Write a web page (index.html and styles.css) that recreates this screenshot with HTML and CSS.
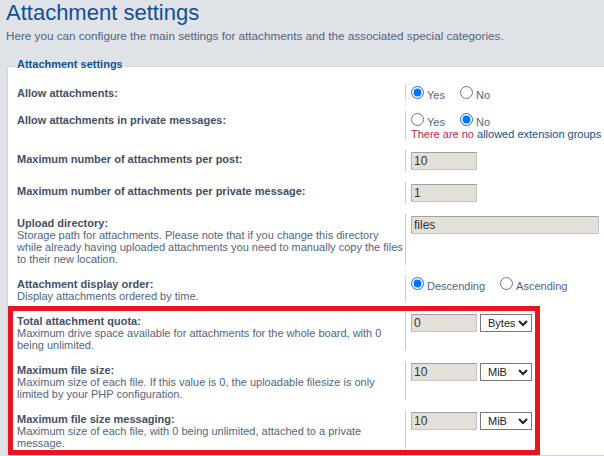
FILE: index.html
```html
<!DOCTYPE html>
<html lang="en">
<head>
<meta charset="utf-8">
<title>Attachment settings</title>
<link rel="stylesheet" href="styles.css">
</head>
<body>
<div class="page">
  <h1 class="title">Attachment settings</h1>
  <p class="intro">Here you can configure the main settings for attachments and the associated special categories.</p>

  <fieldset class="settings">
    <legend class="legend">Attachment settings</legend>

    <div class="row">
      <div class="label"><span class="label-title">Allow attachments:</span></div>
      <div class="field"><label class="choice"><input class="radio" type="radio" name="allow" checked>Yes</label><label class="choice"><input class="radio" type="radio" name="allow">No</label></div>
    </div>

    <div class="row">
      <div class="label"><span class="label-title">Allow attachments in private messages:</span></div>
      <div class="field"><label class="choice"><input class="radio" type="radio" name="allow_pm">Yes</label><label class="choice"><input class="radio" type="radio" name="allow_pm" checked>No</label>
        <div class="notice"><span class="error">There are no</span> <a class="link" href="#">allowed extension groups</a></div>
      </div>
    </div>

    <div class="row">
      <div class="label"><span class="label-title">Maximum number of attachments per post:</span></div>
      <div class="field field-input"><input class="text" type="text" value="10"></div>
    </div>

    <div class="row">
      <div class="label"><span class="label-title">Maximum number of attachments per private message:</span></div>
      <div class="field field-input"><input class="text" type="text" value="1"></div>
    </div>

    <div class="row">
      <div class="label"><span class="label-title">Upload directory:</span><span class="label-desc">Storage path for attachments. Please note that if you change this directory while already having uploaded attachments you need to manually copy the files to their new location.</span></div>
      <div class="field field-input"><input class="text text-wide" type="text" value="files"></div>
    </div>

    <div class="row">
      <div class="label"><span class="label-title">Attachment display order:</span><span class="label-desc">Display attachments ordered by time.</span></div>
      <div class="field"><label class="choice"><input class="radio" type="radio" name="order" checked>Descending</label><label class="choice"><input class="radio" type="radio" name="order">Ascending</label></div>
    </div>

    <div class="highlight">
      <div class="row">
        <div class="label"><span class="label-title">Total attachment quota:</span><span class="label-desc">Maximum drive space available for attachments for the whole board, with 0 being unlimited.</span></div>
        <div class="field field-input"><input class="text" type="text" value="0"><select class="unit"><option>Bytes</option><option>KiB</option><option>MiB</option></select></div>
      </div>

      <div class="row">
        <div class="label"><span class="label-title">Maximum file size:</span><span class="label-desc">Maximum size of each file. If this value is 0, the uploadable filesize is only limited by your PHP configuration.</span></div>
        <div class="field field-input"><input class="text" type="text" value="10"><select class="unit"><option>Bytes</option><option>KiB</option><option selected>MiB</option></select></div>
      </div>

      <div class="row">
        <div class="label"><span class="label-title">Maximum file size messaging:</span><span class="label-desc">Maximum size of each file, with 0 being unlimited, attached to a private message.</span></div>
        <div class="field field-input"><input class="text" type="text" value="10"><select class="unit"><option>Bytes</option><option>KiB</option><option selected>MiB</option></select></div>
      </div>
    </div>
  </fieldset>
</div>
</body>
</html>
```

FILE: styles.css
```css
html {
  overflow: hidden;
}

body {
  margin: 0;
  background: #dfe2e6;
  font-family: "Liberation Sans", Arial, Helvetica, sans-serif;
  font-size: 11px;
  line-height: 12px;
  color: #536482;
}

.page {
  padding: 0 0 0 6px;
}

.title {
  margin: 0;
  padding-top: 1px;
  font-size: 22px;
  line-height: 24px;
  font-weight: normal;
  color: #115098;
}

.intro {
  margin: 4px 0 0;
  font-size: 11.7px;
  line-height: 13px;
  color: #536482;
}

.settings {
  box-sizing: border-box;
  width: 900px;
  min-width: 0;
  margin: 16px 0 0 1px;
  padding: 10px 0 0 9px;
  border: 1px solid #cfd3d8;
  border-radius: 3px;
  background: #fff;
}

.legend {
  padding: 0 2px 4px 0;
  font-weight: bold;
  line-height: 12px;
  color: #115098;
}

.row {
  display: flex;
  margin-bottom: 10px;
}

.label {
  flex: none;
  width: 388px;
  padding-top: 3px;
}

.label-title {
  display: block;
  font-weight: bold;
  color: #425067;
}

.label-desc {
  display: block;
  color: #536482;
}

.field {
  flex: 1;
  border-left: 1px solid #cccccc;
  padding-left: 5px;
}

.field-input {
  display: flex;
  align-items: flex-start;
  gap: 3px;
  padding-top: 2px;
  padding-bottom: 2px;
}

.choice {
  margin-right: 15px;
  color: #536482;
}

.radio {
  margin: 2px 3px 0 0;
}

.notice {
  white-space: nowrap;
}

.error {
  color: #bc2a4d;
}

.link {
  color: #105289;
  text-decoration: none;
}

.text {
  box-sizing: border-box;
  width: 66px;
  height: 18px;
  margin: 0;
  padding: 0 2px;
  border: 1px solid #c4c4c4;
  border-top-color: #a0a0a0;
  border-left-color: #b0b0b0;
  background: #e3e0da;
  font-family: "Liberation Sans", Arial, sans-serif;
  font-size: 12px;
  color: #333333;
}

.text-wide {
  width: 188px;
}

.unit {
  box-sizing: border-box;
  width: 52px;
  height: 18px;
  margin: 0;
  padding: 0 0 0 3px;
  border: 1px solid #777777;
  border-radius: 0;
  background: #ffffff;
  font-family: "Liberation Sans", Arial, sans-serif;
  font-size: 11px;
  color: #222222;
}

.highlight {
  box-sizing: border-box;
  width: 532px;
  margin: -6px 0 0 -9px;
  padding: 1px 0 1px 4px;
  border: 5px solid #e5161f;
}

.highlight .row:last-child {
  margin-bottom: 0;
}
```
